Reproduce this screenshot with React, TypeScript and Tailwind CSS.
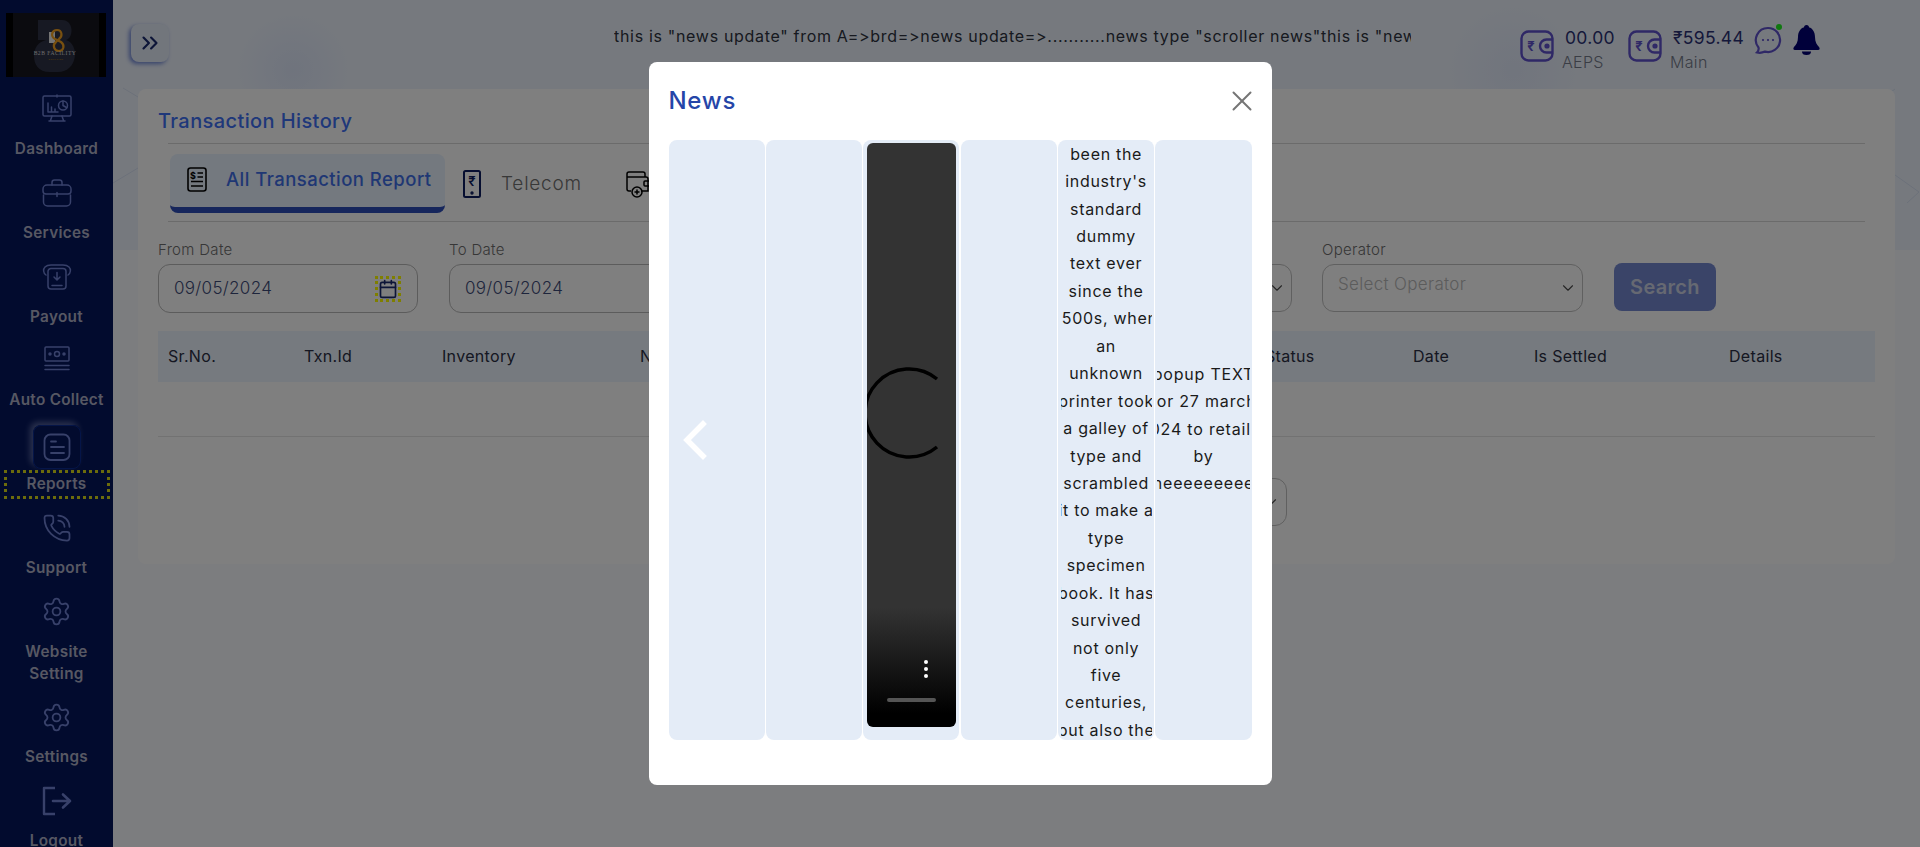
import React from "react";
import { ChevronsRight, ChevronDown, Calendar, Settings, PhoneCall, X } from "lucide-react";

const NavyIcon = ({ children, w = 30, h = 30 }: { children: React.ReactNode; w?: number; h?: number }) => (
  <svg width={w} height={h} viewBox={`0 0 ${w} ${h}`} fill="none" stroke="currentColor" strokeWidth="1.5" strokeLinecap="round" strokeLinejoin="round">
    {children}
  </svg>
);

const DashboardIcon = () => (
  <NavyIcon>
    <rect x="1" y="2" width="28" height="20" rx="1.5" />
    <path d="M15 1v2M6 18V9M6 18h10M9.500 18v-5M13 18v-3M10 22l-1.500 4.500M20 22l1.500 4.500M7 27h16" />
    <circle cx="21" cy="11.500" r="4.500" />
    <path d="M21 7v4.500l3.500 2" />
  </NavyIcon>
);
const ServicesIcon = () => (
  <NavyIcon>
    <path d="M10 7V4.500A2.500 2.500 0 0 1 12.500 2h5A2.500 2.500 0 0 1 20 4.500V7" />
    <path d="M1 11a4 4 0 0 1 4-4h20a4 4 0 0 1 4 4v2a3 3 0 0 1-3 3H4a3 3 0 0 1-3-3z" />
    <path d="M1.500 17v7a4 4 0 0 0 4 4h19a4 4 0 0 0 4-4v-7M15 14.500v4" />
  </NavyIcon>
);
const PayoutIcon = () => (
  <NavyIcon>
    <path d="M4 13C1 11 1 7 3 5s4-2 6-2h12c2 0 4 0 6 2s2 6-1 8" />
    <path d="M9 6.500h12a3 3 0 0 1 3 3V24a3 3 0 0 1-3 3H9a3 3 0 0 1-3-3V9.500a3 3 0 0 1 3-3z" />
    <path d="M15 10.500v7M12 15l3 3 3-3M10 23.500h10" />
  </NavyIcon>
);
const CollectIcon = () => (
  <NavyIcon>
    <rect x="3" y="2" width="24" height="14" rx="1" />
    <circle cx="15" cy="9" r="2.500" />
    <circle cx="8" cy="9" r="1" fill="currentColor" />
    <circle cx="22" cy="9" r="1" fill="currentColor" />
    <path d="M3 20.500h24M3 24.500h24" />
  </NavyIcon>
);
const ReportsIcon = () => (
  <NavyIcon w={28} h={28}>
    <rect x="1.500" y="1.500" width="25" height="25.500" rx="6" strokeWidth="1.800" />
    <path d="M8 8.500h5M8 14h13M8 20h13" strokeWidth="1.800" />
  </NavyIcon>
);
const LogoutIcon = () => (
  <NavyIcon w={30} h={30}>
    <path d="M13 2H2v26h11" strokeWidth="2.400" strokeLinecap="butt" />
    <path d="M11 15h17M21 8.500 28 15l-7 6.500" strokeWidth="2.600" />
  </NavyIcon>
);

const navItems: { label: string[]; icon: React.ReactNode; focus?: boolean }[] = [
  { label: ["Dashboard"], icon: <DashboardIcon /> },
  { label: ["Services"], icon: <ServicesIcon /> },
  { label: ["Payout"], icon: <PayoutIcon /> },
  { label: ["Auto Collect"], icon: <CollectIcon /> },
  { label: ["Reports"], icon: <ReportsIcon />, focus: true },
  { label: ["Support"], icon: <PhoneCall size={30} strokeWidth={1.4} /> },
  { label: ["Website", "Setting"], icon: <Settings size={31} strokeWidth={1.4} /> },
  { label: ["Settings"], icon: <Settings size={31} strokeWidth={1.4} /> },
  { label: ["Logout"], icon: <LogoutIcon /> },
];

const Logo = () => (
  <div className="mx-[6px] mt-[13px] h-[64px] w-[100px] shrink-0 overflow-hidden bg-[#16161e]">
    <svg width="100" height="64" viewBox="0 0 100 64" fill="none">
      <rect width="7" height="64" fill="#000" />
      <rect x="93" width="7" height="64" fill="#000" />
      <path d="M32 7h24c12 0 12 18 4 20 14 4 12 32-8 32H44c-12 0-16-8-16-16s4-14 12-16h-8z" fill="#2e3246" />
      <rect x="43" y="19" width="6" height="11" fill="#e8e8e8" />
      <path d="M49 26c-5-3-3-9 2-9s6 6 2 9l-3 3c-4 3-2 9 3 9s6-6 2-9z" stroke="#f0a020" strokeWidth="2.200" />
      <text x="49" y="41.500" textAnchor="middle" fontSize="5.600" fill="#d8d8d8" fontFamily="Liberation Serif, serif" letterSpacing="0.500">B2B FACILITY</text>
      <text x="50" y="46.500" textAnchor="middle" fontSize="2.400" fill="#b08020" fontFamily="Liberation Sans, sans-serif">SOLUTION</text>
    </svg>
  </div>
);

const Sidebar = () => (
  <aside className="flex h-full w-[113px] shrink-0 flex-col bg-[#04165c] text-[#7082d4]">
    <Logo />
    <div className="mt-[11px] flex flex-col">
      {navItems.map((item) => (
        <div
          key={item.label[0]}
          className={item.label.length > 1 ? "flex h-[105.750px] flex-col items-center" : "flex h-[83.750px] flex-col items-center"}
        >
          {item.focus ? (
            <>
              <div className="mt-[2px] flex h-[44px] w-[48px] items-center justify-center rounded-lg border border-[#0a2a90] shadow-[-3px_-3px_6px_rgba(190,200,240,0.45)]">
                {item.icon}
              </div>
              <div className="mt-[1px] flex h-[29px] w-[106px] items-center justify-center border-[3px] border-dotted border-[#d8d818] text-[15.300px] font-semibold tracking-[0.02em] text-[#aeb0c6]">
                {item.label[0]}
              </div>
            </>
          ) : (
            <>
              <div className="flex h-[42px] items-center justify-center">{item.icon}</div>
              <div className="mt-[8px] text-center text-[15.300px] font-semibold leading-[22px] tracking-[0.02em] text-[#aeb0c6]">
                {item.label.map((l) => (
                  <div key={l}>{l}</div>
                ))}
              </div>
            </>
          )}
        </div>
      ))}
    </div>
  </aside>
);

const Wallet = () => (
  <svg width="34" height="32" viewBox="0 0 34 32" fill="none" stroke="#5e50cc" strokeWidth="2.400">
    <rect x="1.500" y="1.500" width="31" height="29" rx="7" />
    <path d="M33 9.500h-6.500a6.500 6.500 0 0 0 0 13H33" />
    <circle cx="27" cy="16" r="1.400" />
    <text x="11" y="21" textAnchor="middle" fontSize="13" fontWeight="700" fill="#5e50cc" stroke="none" fontFamily="Inter, sans-serif">₹</text>
  </svg>
);

const Balance = ({ value, name, gap }: { value: string; name: string; gap: string }) => (
  <div className={gap}>
    <div className="text-[17.500px] leading-[22px] text-[#2a3074]">{value}</div>
    <div className="-ml-[3px] mt-[2px] text-[16px] font-light leading-[22px] text-[#747a8a]">{name}</div>
  </div>
);

const Header = () => (
  <header className="flex h-[89px] shrink-0 items-start">
    <button className="ml-[18px] mt-[24px] flex h-[38px] w-[38px] items-center justify-center rounded-lg bg-[#e4ecf8] text-[#1a2a70] shadow-[-2px_2px_4px_rgba(60,90,200,0.7)]">
      <ChevronsRight size={26} strokeWidth={2} />
    </button>
    <div className="ml-[445px] mt-[25px] w-[797px] overflow-hidden whitespace-nowrap text-[16px] leading-[22px] tracking-[0.043em] text-[#2e3240]">
      this is "news update" from A=&gt;brd=&gt;news update=&gt;...........news type "scroller news"this is "news update" from A=&gt;brd=&gt;news update
    </div>
    <div className="ml-[109px] mt-[30px]"><Wallet /></div>
    <Balance value="00.00" name="AEPS" gap="ml-[11px] mt-[27px] w-[63px]" />
    <div className="mt-[30px]"><Wallet /></div>
    <Balance value="₹595.44" name="Main" gap="ml-[11px] mt-[27px] w-[81px]" />
    <div className="relative mt-[26px]">
      <svg width="28" height="28" viewBox="0 0 28 28" fill="none" stroke="#5e50cc" strokeWidth="2.200">
        <path d="M14 2a12 12 0 1 1-3 23.600C8 27 5 27 3 26.500c1.500-1.500 2-3 1.500-5A12 12 0 0 1 14 2z" />
        <circle cx="9" cy="14" r="0.700" fill="#5e50cc" strokeWidth="1" />
        <circle cx="14" cy="14" r="0.700" fill="#5e50cc" strokeWidth="1" />
        <circle cx="19" cy="14" r="0.700" fill="#5e50cc" strokeWidth="1" />
      </svg>
      <span className="absolute right-[0px] top-[-2px] h-[6px] w-[6px] rounded-full bg-[#20f020]" />
    </div>
    <div className="ml-[11px] mt-[25px]">
      <svg width="27" height="30" viewBox="0 0 27 30" fill="#000074">
        <circle cx="13.500" cy="2.500" r="2.500" />
        <path d="M13.500 2C7.500 2 5 7 5 12c0 5-2 8-4 10-1 1-1 3 1 3h23c2 0 2-2 1-3-2-2-4-5-4-10 0-5-2.500-10-8.500-10z" />
        <path d="M9 26.500h9a4.500 3.500 0 0 1-9 0z" />
      </svg>
    </div>
  </header>
);

const DocIcon = () => (
  <svg width="20" height="25" viewBox="0 0 20 25" fill="none" stroke="#000" strokeWidth="1.600" className="shrink-0">
    <rect x="1" y="1" width="18" height="23" rx="2.500" />
    <path d="M10.500 6h5.500M10.500 10h5.500M4 14.500h12M4 19h12" />
    <text x="6" y="11.500" textAnchor="middle" fontSize="9" fontWeight="700" fill="#000" stroke="none" fontFamily="Inter, sans-serif">$</text>
  </svg>
);

const PhoneRupee = () => (
  <svg width="18" height="28" viewBox="0 0 18 28" fill="none" stroke="#0c1c60" strokeWidth="2" className="shrink-0">
    <rect x="1" y="1" width="16" height="26" rx="1.500" />
    <circle cx="9" cy="23" r="0.700" fill="#0c1c60" />
    <text x="9" y="16" textAnchor="middle" fontSize="13" fontWeight="600" fill="#0c1c60" stroke="none" fontFamily="Inter, sans-serif">₹</text>
  </svg>
);

const WalletPlus = () => (
  <svg width="25" height="27" viewBox="0 0 25 27" fill="none" stroke="#000" strokeWidth="1.500" className="shrink-0">
    <path d="M5 20H3a2 2 0 0 1-2-2V3a2 2 0 0 1 2-2h14a2 2 0 0 1 2 2v3" />
    <path d="M1 6h19a2 2 0 0 1 2 2v12h-7" />
    <rect x="18" y="10" width="6.500" height="5" rx="1" />
    <circle cx="11" cy="21" r="5" />
    <path d="M11 18.500v5M8.500 21h5" />
  </svg>
);

const Tabs = () => (
  <div className="ml-[32px] mt-[10px] flex h-[59px] items-start">
    <div className="flex h-[59px] w-[275px] items-start gap-[19px] rounded-lg border-b-[6px] border-[#2c4cb8] bg-[#e8f2fe] pl-[17px] pt-[13px]">
      <DocIcon />
      <span className="whitespace-nowrap text-[18.500px] font-medium leading-[24px] tracking-[0.025em] text-[#3f6fe8]">All Transaction Report</span>
    </div>
    <div className="ml-[18px] mt-[16px] flex items-center gap-[20px]">
      <PhoneRupee />
      <span className="text-[19px] font-light tracking-[0.04em] text-[#707070]">Telecom</span>
    </div>
    <div className="ml-[44px] mt-[17px]"><WalletPlus /></div>
  </div>
);

const DateField = ({ label, icon, className }: { label: string; icon?: boolean; className: string }) => (
  <div className={className}>
    <div className="h-[24px] text-[15px] font-light leading-[20px] text-[#6e6e6e]">{label}</div>
    <div className="flex h-[49px] w-full items-center justify-between rounded-xl border border-[#b8b8b8] pl-[15px] pr-[16px] text-[#3c4a78]">
      <span className="text-[17px] font-light">09/05/2024</span>
      {icon && (
        <span className="flex h-[26px] w-[26px] items-center justify-center border-[3px] border-dotted border-[#ffff00]">
          <Calendar size={20} strokeWidth={2} className="shrink-0 text-[#1a2a70]" />
        </span>
      )}
    </div>
  </div>
);

const SelectField = ({ label, placeholder, className }: { label: string; placeholder: string; className: string }) => (
  <div className={className}>
    <div className="h-[24px] text-[15px] font-light leading-[20px] text-[#6e6e6e]">{label}</div>
    <div className="flex h-[48px] w-full items-center justify-between rounded-xl border border-[#c0c0c0] pl-[15px] pr-[5px]">
      <span className="-mt-[6px] text-[17px] font-light text-[#b8b8b8]">{placeholder}</span>
      <ChevronDown size={18} strokeWidth={1.500} className="text-[#4c4c4c]" />
    </div>
  </div>
);

const cols: [string, string][] = [
  ["Sr.No.", "w-[136px]"],
  ["Txn.Id", "w-[138px]"],
  ["Inventory", "w-[198px]"],
  ["Number", "w-[625px]"],
  ["Status", "w-[148px]"],
  ["Date", "w-[121px]"],
  ["Is Settled", "w-[195px]"],
  ["Details", "w-[100px]"],
];

const Card = () => (
  <section className="relative ml-[25px] h-[475px] w-[1757px] shrink-0 rounded-lg bg-white">
    <h2 className="ml-[20px] pt-[20px] text-[20px] font-medium leading-[24px] tracking-[0.02em] text-[#3f70f4]">Transaction History</h2>
    <div className="ml-[30px] mt-[10px] h-px w-[1697px] bg-[#d6d6d6]" />
    <Tabs />
    <div className="ml-[30px] mt-[8px] h-px w-[1697px] bg-[#d6d6d6]" />
    <div className="ml-[20px] mt-[18px] flex items-start">
      <DateField label="From Date" icon className="w-[260px]" />
      <DateField label="To Date" className="ml-[31px] w-[260px]" />
      <SelectField label="Status" placeholder="Select Status" className="ml-[322px] w-[261px]" />
      <SelectField label="Operator" placeholder="Select Operator" className="ml-[30px] w-[261px]" />
      <button className="ml-[31px] mt-[23px] h-[48px] w-[102px] rounded-lg bg-[#7488d0] text-[20px] font-semibold text-[#ccd2e4]">Search</button>
    </div>
    <div className="ml-[20px] mt-[18px] flex h-[51px] w-[1717px] items-center bg-[#ecf4fe] pb-[2px] pl-[10px] text-[16px] text-[#2a2e44]">
      {cols.map(([c, w]) => (
        <div key={c} className={w}>{c}</div>
      ))}
    </div>
    <div className="ml-[20px] mt-[54px] h-px w-[1717px] bg-[#e4e4e4]" />
    <div className="ml-[1049px] mt-[41px] flex h-[48px] w-[100px] items-center justify-end rounded-xl border border-[#c0c0c0] pr-[6px] text-[#4c4c4c]">
      <ChevronDown size={18} strokeWidth={1.500} />
    </div>
  </section>
);

const Backdrop = () => (
  <svg className="absolute left-0 top-0" width="1807" height="250" fill="none" stroke="#d8e2f4" strokeWidth="1">
    <path d="M10 88l15 9M0 183l25-15M1782 89l-8 6M1782 175l24 17-12 11" />
  </svg>
);

const column5 = [
  "been the", "industry's", "standard", "dummy", "text ever", "since the", "1500s, when", "an", "unknown",
  "printer took", "a galley of", "type and", "scrambled", "it to make a", "type", "specimen", "book. It has",
  "survived", "not only", "five", "centuries,", "but also the",
];
const column6 = ["popup TEXT", "for 27 march", "2024 to retailer", "by", "heeeeeeeee"];

const Lines = ({ lines }: { lines: string[] }) => (
  <>
    {lines.map((l) => (
      <div key={l} className="flex h-[27.450px] items-center justify-center whitespace-nowrap">
        <span className="shrink-0">{l}</span>
      </div>
    ))}
  </>
);

const slide = "h-[600px] w-[96.200px] shrink-0 overflow-hidden rounded-lg bg-[#e4ecf7]";

const Modal = () => (
  <div className="fixed inset-0 flex items-start justify-center bg-black/50">
    <div className="mt-[62px] h-[723px] w-[623px] rounded-lg bg-white px-[20px]">
      <div className="flex h-[78px] items-center justify-between">
        <h3 className="text-[24px] font-medium leading-[32px] tracking-[0.03em] text-[#2545a8]">News</h3>
        <X size={34} strokeWidth={1.400} className="-mr-[7px] text-[#757575]" />
      </div>
      <div className="relative flex w-[583px] gap-[1.200px]">
        <div className={slide} />
        <div className={slide} />
        <div className={slide}>
          <div className="relative ml-[4px] mt-[3px] h-[584px] w-[89px] overflow-hidden rounded-md bg-[linear-gradient(#333333_0,#333333_465px,#000000_570px)]">
            <svg className="absolute left-0 top-[224px]" width="89" height="92" viewBox="0 0 89 92" fill="none" stroke="#000" strokeWidth="3.500">
              <path d="M70 12A44 44 0 1 0 70 80" />
            </svg>
            <span className="absolute left-[57px] top-[517px] h-[4px] w-[4px] rounded-full bg-white" />
            <span className="absolute left-[57px] top-[524px] h-[4px] w-[4px] rounded-full bg-white" />
            <span className="absolute left-[57px] top-[531px] h-[4px] w-[4px] rounded-full bg-white" />
            <span className="absolute left-[20px] top-[555px] h-[4px] w-[49px] rounded-full bg-[#555555]" />
          </div>
        </div>
        <div className={slide} />
        <div className={slide}>
          <div className="mx-[2.500px] h-full overflow-hidden text-[16px] tracking-[0.043em] text-[#1a1a1a]">
            <Lines lines={column5} />
          </div>
        </div>
        <div className={slide}>
          <div className="mx-[2px] h-full overflow-hidden pt-[220px] text-[16px] tracking-[0.05em] text-[#1a1a1a]">
            <Lines lines={column6} />
          </div>
        </div>
        <svg className="absolute left-[12px] top-[280px]" width="28" height="40" viewBox="0 0 28 40" fill="none" stroke="#fff" strokeWidth="5.500" strokeLinecap="square">
          <path d="M22 4 6 20l16 16" />
        </svg>
      </div>
    </div>
  </div>
);

export default function App() {
  return (
    <div className="relative flex h-screen w-full overflow-hidden bg-[#f8fafe] font-['Inter',sans-serif] tracking-[0.02em]">
      <Sidebar />
      <main className="relative flex h-full flex-1 flex-col bg-[radial-gradient(circle_at_180px_70px,#dfe8fb_0,transparent_60px),radial-gradient(circle_at_1400px_70px,#e2eafb_0,transparent_70px),linear-gradient(#edf3fd_0,#edf3fd_250px,#f9fafe_250px)]">
        <Backdrop />
        <div className="relative flex flex-col">
          <Header />
          <Card />
        </div>
      </main>
      <Modal />
    </div>
  );
}
